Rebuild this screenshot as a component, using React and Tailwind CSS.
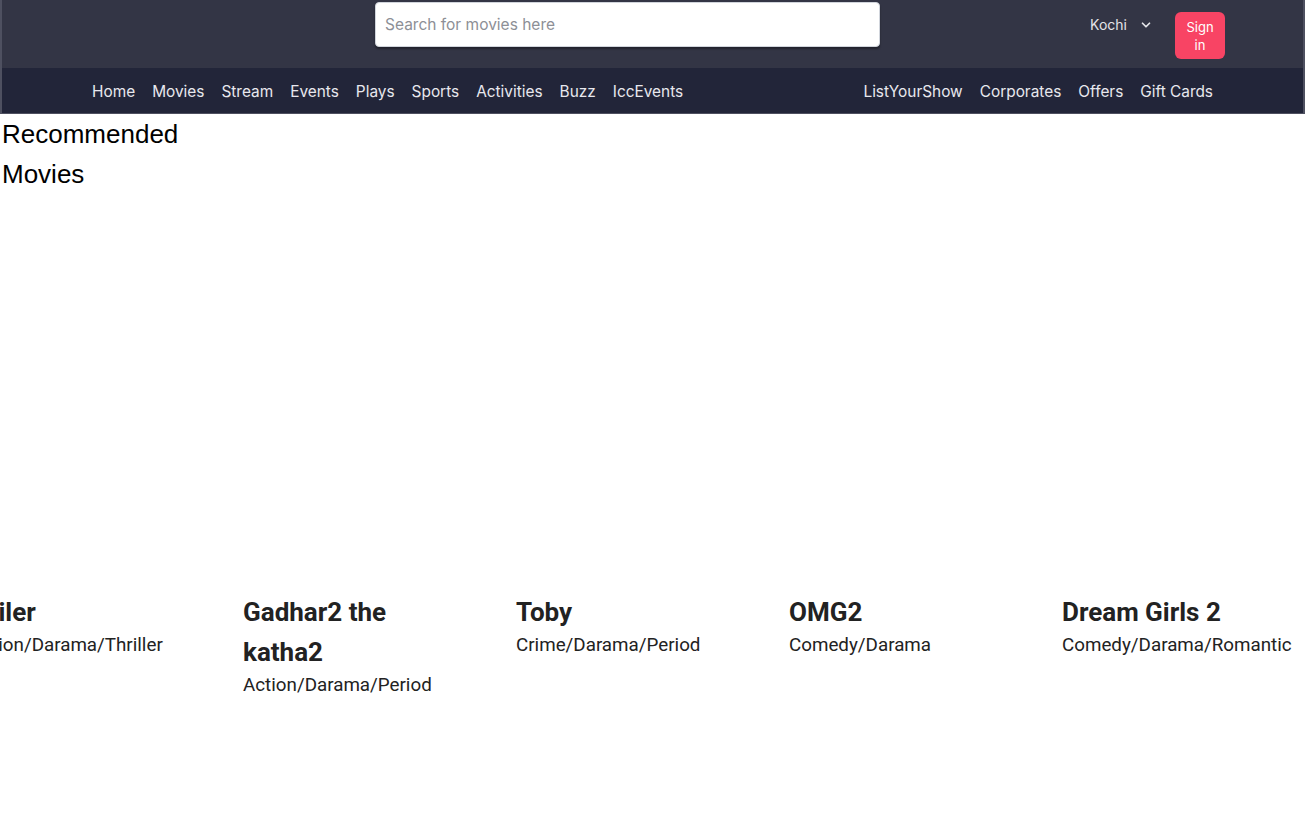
import { ChevronDown } from "lucide-react";

const leftLinks = ["Home", "Movies", "Stream", "Events", "Plays", "Sports", "Activities", "Buzz", "IccEvents"];
const rightLinks = ["ListYourShow", "Corporates", "Offers", "Gift Cards"];

const movies = [
  { title: "Jailer", genre: "Action/Darama/Thriller" },
  { title: "Gadhar2 the katha2", genre: "Action/Darama/Period" },
  { title: "Toby", genre: "Crime/Darama/Period" },
  { title: "OMG2", genre: "Comedy/Darama" },
  { title: "Dream Girls 2", genre: "Comedy/Darama/Romantic" },
];

function Header() {
  return (
    <header className="border-x-2 border-b-[1px] border-[#4e5060] font-['Inter',sans-serif]">
      <div className="bg-[#333545] h-[68px] flex items-start">
        <input
          type="text"
          placeholder="Search for movies here"
          className="ml-[373px] mt-[2px] w-[505px] h-[45px] bg-white rounded-[4px] border border-gray-300 shadow-[0_2px_2px_rgba(0,0,0,0.35)] px-[9px] text-[15.5px] text-gray-700 placeholder:text-[#8d8f96] outline-none"
        />
        <div className="ml-auto flex items-start">
          <button className="mt-[14px] flex items-center gap-[12px] text-[14px] text-[#e4e4e8]">
            Kochi
            <ChevronDown size={14} strokeWidth={3} />
          </button>
          <button className="ml-[22px] mt-[12px] mr-[78px] w-[50px] h-[47px] rounded-md bg-[#f84464] text-white text-[13px] leading-[18px] px-[11px] text-center">
            Sign in
          </button>
        </div>
      </div>
      <nav className="bg-[#222539] h-[45px] pt-[2px] flex items-center text-[15.4px] text-[#e8e8ee]">
        <ul className="flex gap-[17px] ml-[90px]">
          {leftLinks.map((l) => (
            <li key={l}>
              <a href="#">{l}</a>
            </li>
          ))}
        </ul>
        <ul className="flex gap-[17px] ml-auto mr-[90px]">
          {rightLinks.map((l) => (
            <li key={l}>
              <a href="#">{l}</a>
            </li>
          ))}
        </ul>
      </nav>
    </header>
  );
}

function MovieCard({ movie }) {
  return (
    <div className="w-[273px] shrink-0">
      <div className="h-[398px]" />
      <div className="w-[225px] font-['Roboto',sans-serif] text-[#222]">
        <h3 className="text-[26px] font-bold leading-[40px]">{movie.title}</h3>
        <p className="text-[18.8px] leading-[26px] whitespace-nowrap">{movie.genre}</p>
      </div>
    </div>
  );
}

export default function App() {
  return (
    <div className="bg-white min-h-screen">
      <Header />
      <main>
        <h2 className="w-[200px] pl-[2px] text-[26px] leading-[40px] text-black font-['Liberation_Sans',Arial,sans-serif]">
          Recommended Movies
        </h2>
        <div className="overflow-hidden">
          <div className="flex -ml-[30px]">
            {movies.map((m) => (
              <MovieCard key={m.title} movie={m} />
            ))}
          </div>
        </div>
      </main>
    </div>
  );
}
